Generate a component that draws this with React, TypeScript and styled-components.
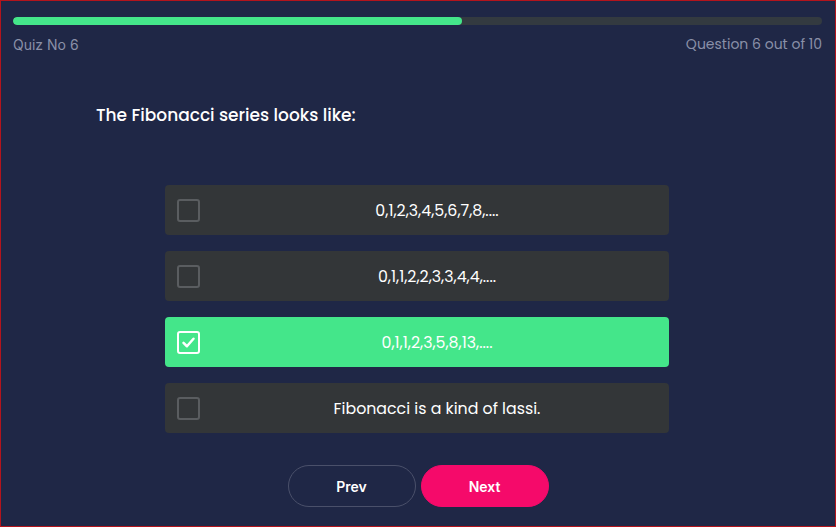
import React, { useState } from 'react';
import styled, { createGlobalStyle } from 'styled-components';

const GlobalStyle = createGlobalStyle`
  html, body {
    margin: 0;
    padding: 0;
    background: #1f2746;
  }
  * {
    box-sizing: border-box;
  }
`;

const Page = styled.div`
  height: 527px;
  border: 1px solid #b3141c;
  padding: 16px 12px 0 12px;
  font-family: 'Poppins', 'Open Sans', sans-serif;
  color: #fff;
`;

const Track = styled.div`
  height: 8px;
  margin-right: 1px;
  border-radius: 4px;
  background: #333a40;
  overflow: hidden;
`;

const Fill = styled.div`
  height: 100%;
  border-radius: 4px;
  background: #44e68a;
`;

const MetaRow = styled.div`
  display: flex;
  justify-content: space-between;
  align-items: center;
  margin-top: 9px;
  padding-right: 1px;
  height: 20px;
  color: #8a90a8;
`;

const QuizLabel = styled.span`
  font-family: 'Inter', 'Liberation Sans', sans-serif;
  font-size: 14px;
`;

const Counter = styled.span`
  font-size: 14px;
`;

const Question = styled.h2`
  margin: 49px 0 0 83px;
  font-size: 17px;
  line-height: 24px;
  font-weight: 500;
`;

const Options = styled.div`
  width: 504px;
  margin: 58px 0 0 152px;
  display: flex;
  flex-direction: column;
  gap: 16px;
`;

const Option = styled.div<{ selected: boolean }>`
  height: 50px;
  border-radius: 4px;
  background: ${p => (p.selected ? '#44e68a' : '#333638')};
  display: flex;
  align-items: center;
  gap: 5px;
  padding: 0 0 0 12px;
  font-size: 15.8px;
  cursor: pointer;
`;

const Box = styled.span<{ selected: boolean }>`
  flex: none;
  width: 23px;
  height: 23px;
  border-radius: 3px;
  border: 2px solid ${p => (p.selected ? '#ffffff' : '#5a5d60')};
  display: flex;
  align-items: center;
  justify-content: center;
`;

const Label = styled.span`
  flex: 1;
  text-align: center;
`;

const Buttons = styled.div`
  display: flex;
  justify-content: center;
  gap: 5px;
  margin-top: 32px;
`;

const Button = styled.button<{ primary?: boolean }>`
  width: 128px;
  height: 42px;
  border-radius: 21px;
  border: 1px solid ${p => (p.primary ? '#f50a6a' : '#4a506a')};
  background: ${p => (p.primary ? '#f50a6a' : 'transparent')};
  color: #fff;
  font-family: 'Inter', 'Liberation Sans', sans-serif;
  font-size: 14px;
  font-weight: 600;
  cursor: pointer;
`;

const answers = [
  '0,1,2,3,4,5,6,7,8,....',
  '0,1,1,2,2,3,3,4,4,....',
  '0,1,1,2,3,5,8,13,....',
  'Fibonacci is a kind of lassi.',
];

const App: React.FC = () => {
  const [selected, setSelected] = useState(2);

  return (
    <Page>
      <GlobalStyle />
      <Track>
        <Fill style={{ width: '55.5%' }} />
      </Track>
      <MetaRow>
        <QuizLabel>Quiz No 6</QuizLabel>
        <Counter>Question 6 out of 10</Counter>
      </MetaRow>
      <Question>The Fibonacci series looks like:</Question>
      <Options>
        {answers.map((a, i) => (
          <Option key={i} selected={i === selected} onClick={() => setSelected(i)}>
            <Box selected={i === selected}>
              {i === selected && (
                <svg width="15" height="15" viewBox="0 0 24 24" fill="none" stroke="#fff" strokeWidth="4" strokeLinecap="round" strokeLinejoin="round">
                  <polyline points="4 12.5 9.5 18 20 6" />
                </svg>
              )}
            </Box>
            <Label>{a}</Label>
          </Option>
        ))}
      </Options>
      <Buttons>
        <Button>Prev</Button>
        <Button primary>Next</Button>
      </Buttons>
    </Page>
  );
};

export default App;
